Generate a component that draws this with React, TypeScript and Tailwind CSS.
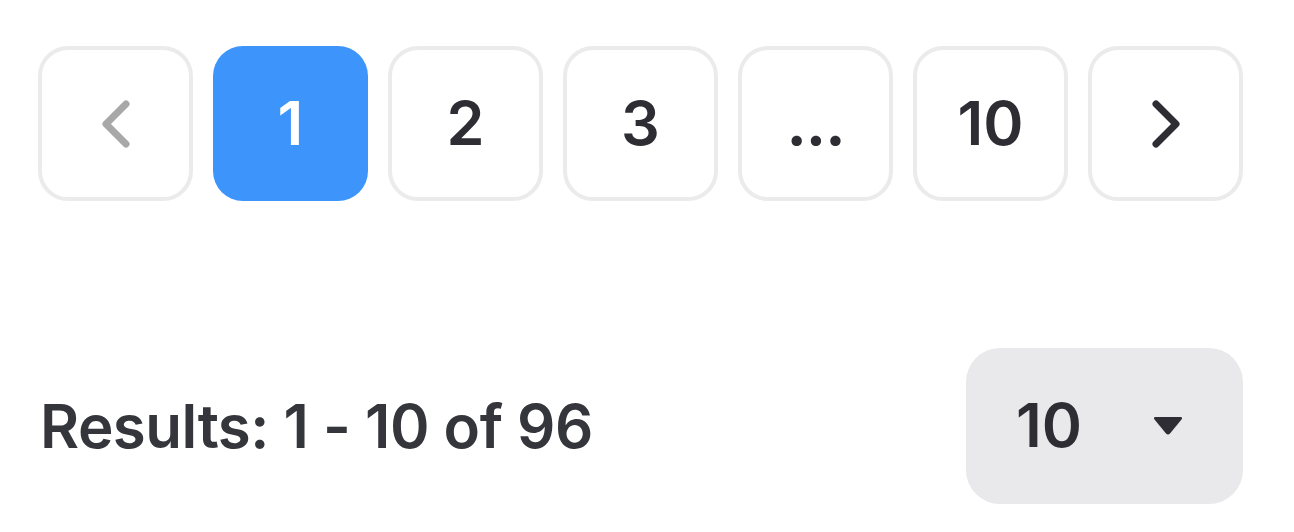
import React from "react";

const pages = ["1", "2", "3", "...", "10"];

function Chevron({ dir, className }: { dir: "left" | "right"; className: string }) {
  return (
    <svg width="30" height="48" viewBox="0 0 30 48" className={className}>
      <path
        d={dir === "left" ? "M25 4 L5 24 L25 44" : "M5 4 L25 24 L5 44"}
        fill="none"
        stroke="currentColor"
        strokeWidth="7"
        strokeLinecap="round"
        strokeLinejoin="round"
      />
    </svg>
  );
}

export default function App() {
  const current = "1";

  return (
    <div
      className="w-[1294px] h-[532px] bg-white pl-[38px] pr-[51px] pt-[46px]"
      style={{ fontFamily: "Inter, 'Noto Sans', sans-serif" }}
    >
      {/* Pager */}
      <div className="flex gap-[20px]">
        <button className="w-[155px] h-[155px] rounded-[30px] border-4 border-[#ebebeb] flex items-center justify-center">
          <Chevron dir="left" className="text-[#a8a8a8]" />
        </button>
        {pages.map((p) => (
          <button
            key={p}
            className={
              p === current
                ? "w-[155px] h-[155px] rounded-[30px] bg-[#3d95fb] text-white flex items-center justify-center text-[61px] font-semibold"
                : "w-[155px] h-[155px] rounded-[30px] border-4 border-[#ebebeb] text-[#2d2d33] flex items-center justify-center text-[61px] font-semibold"
            }
          >
            {p === "..." ? <span className="font-bold tracking-[-1px]">...</span> : p}
          </button>
        ))}
        <button className="w-[155px] h-[155px] rounded-[30px] border-4 border-[#ebebeb] flex items-center justify-center">
          <Chevron dir="right" className="text-[#2d2d33]" />
        </button>
      </div>

      {/* Footer */}
      <div className="mt-[147px] flex items-center justify-between">
        <span className="pl-[2px] text-[60px] font-semibold text-[#35353c] tracking-[-0.5px]">
          Results: 1 - 10 of 96
        </span>
        <button className="w-[277px] h-[156px] rounded-[34px] bg-[#e9e9eb] flex items-center pl-[50px] pr-[60px] justify-between">
          <span className="text-[61px] font-semibold text-[#2d2d33]">10</span>
          <svg width="30" height="20" viewBox="0 0 30 20">
            <path d="M2.5 1 H27.5 Q30 1 28.5 3.5 L17 17.5 Q15 19.5 13 17.5 L1.5 3.5 Q0 1 2.5 1 Z" fill="#2d2d33" />
          </svg>
        </button>
      </div>
    </div>
  );
}
